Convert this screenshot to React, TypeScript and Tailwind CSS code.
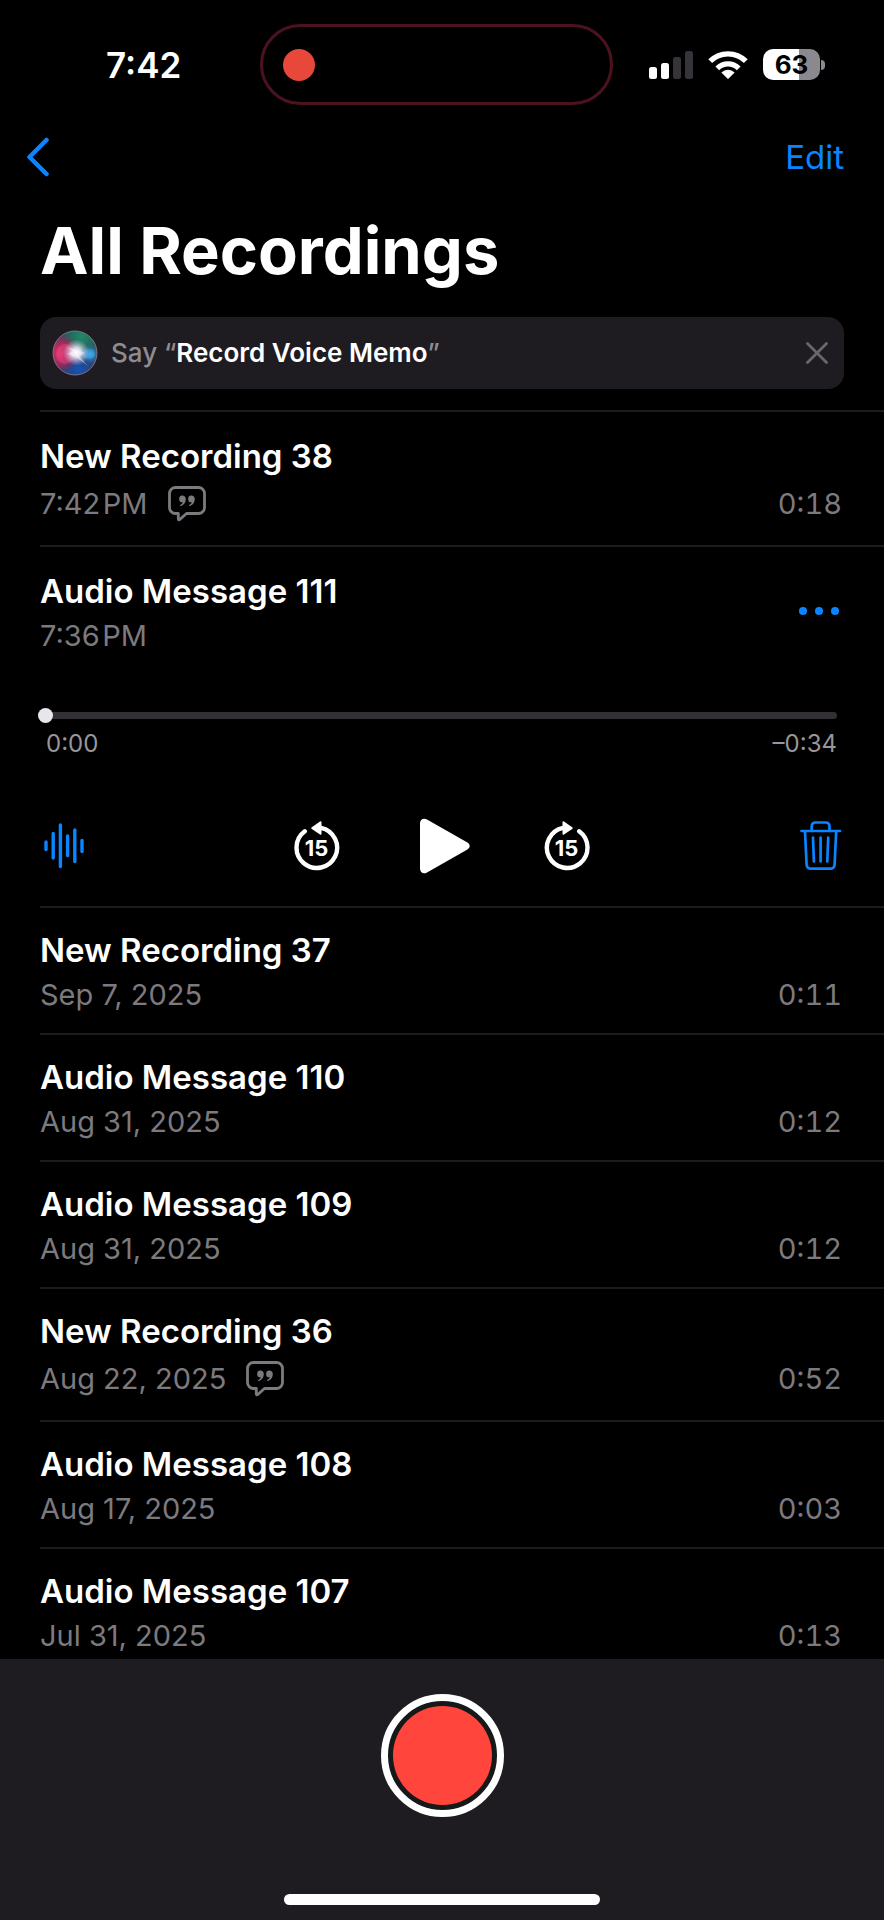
import React, { useState } from 'react';

interface Recording {
  id: number;
  title: string;
  date: string;
  duration: string;
  hasTranscript?: boolean;
}

const recordings: Recording[] = [
  { id: 1, title: 'New Recording 38', date: '7:42\u200APM', duration: '0:18', hasTranscript: true },
  { id: 2, title: 'Audio Message 111', date: '7:36\u200APM', duration: '0:34' },
  { id: 3, title: 'New Recording 37', date: 'Sep 7, 2025', duration: '0:11' },
  { id: 4, title: 'Audio Message 110', date: 'Aug 31, 2025', duration: '0:12' },
  { id: 5, title: 'Audio Message 109', date: 'Aug 31, 2025', duration: '0:12' },
  { id: 6, title: 'New Recording 36', date: 'Aug 22, 2025', duration: '0:52', hasTranscript: true },
  { id: 7, title: 'Audio Message 108', date: 'Aug 17, 2025', duration: '0:03' },
  { id: 8, title: 'Audio Message 107', date: 'Jul 31, 2025', duration: '0:13' },
];

const SignalIcon = () => (
  <svg width="44" height="28" viewBox="0 0 44 28" aria-hidden="true">
    <rect x="0" y="16" width="8" height="12" rx="2.5" fill="#fff" />
    <rect x="12" y="12" width="8" height="16" rx="2.5" fill="#fff" />
    <rect x="24" y="6" width="8" height="22" rx="2.5" fill="#363438" />
    <rect x="36" y="0" width="8" height="28" rx="2.5" fill="#363438" />
  </svg>
);

const WifiIcon = () => (
  <svg width="40" height="28" viewBox="0 0 40 28" fill="none" stroke="#fff" strokeWidth="5.4" aria-hidden="true">
    <path d="M2.2 10.2A25.2 25.2 0 0 1 37.8 10.2" />
    <path d="M9.3 17.3A15.1 15.1 0 0 1 30.7 17.3" />
    <path d="M13.4 21.4A9.3 9.3 0 0 1 26.6 21.4L20.6 27.6Q20 28.2 19.4 27.6Z" fill="#fff" stroke="none" />
  </svg>
);

const SiriOrb = () => (
  <svg width="46" height="46" viewBox="0 0 46 46" aria-hidden="true">
    <defs>
      <radialGradient id="orbPink" cx="0.15" cy="0.5" r="0.45">
        <stop offset="0" stopColor="#e03070" />
        <stop offset="0.6" stopColor="#b02454" stopOpacity="0.8" />
        <stop offset="1" stopColor="#902050" stopOpacity="0" />
      </radialGradient>
      <radialGradient id="orbGreen" cx="0.65" cy="0.12" r="0.5">
        <stop offset="0" stopColor="#1f8a68" />
        <stop offset="0.6" stopColor="#1f6f5c" stopOpacity="0.8" />
        <stop offset="1" stopColor="#1f6b5c" stopOpacity="0" />
      </radialGradient>
      <radialGradient id="orbBlue" cx="0.58" cy="0.88" r="0.55">
        <stop offset="0" stopColor="#1454b8" />
        <stop offset="1" stopColor="#1a3a80" stopOpacity="0" />
      </radialGradient>
      <radialGradient id="orbCyan" cx="0.85" cy="0.53" r="0.22">
        <stop offset="0" stopColor="#38b8f0" />
        <stop offset="1" stopColor="#2080d0" stopOpacity="0" />
      </radialGradient>
      <radialGradient id="orbGlow" cx="0.53" cy="0.49" r="0.3">
        <stop offset="0" stopColor="#fff" />
        <stop offset="0.35" stopColor="#f4f4ff" stopOpacity="0.85" />
        <stop offset="1" stopColor="#d0c8e8" stopOpacity="0" />
      </radialGradient>
    </defs>
    <circle cx="23" cy="23" r="22" fill="#3a4468" />
    <circle cx="23" cy="23" r="22" fill="url(#orbGreen)" />
    <circle cx="23" cy="23" r="22" fill="url(#orbBlue)" />
    <circle cx="23" cy="23" r="22" fill="url(#orbPink)" />
    <circle cx="23" cy="23" r="22" fill="url(#orbCyan)" />
    <ellipse cx="13" cy="24" rx="9" ry="10" fill="#ff5c98" opacity="0.3" />
    <ellipse cx="37" cy="24" rx="6" ry="5" fill="#40b0f0" opacity="0.4" />
    <circle cx="23" cy="23" r="22" fill="url(#orbGlow)" />
    <path d="M14 17L25 20L33 23L27 26L36 36L24 27L15 24L21 21Z" fill="#fff" opacity="0.4" />
    <circle cx="23" cy="23" r="22" fill="none" stroke="#8a8090" strokeWidth="1" opacity="0.8" />
  </svg>
);

const TranscriptIcon = () => (
  <svg width="38" height="36" viewBox="0 0 38 36" role="img" aria-label="Transcript available">
    <path
      d="M7.5 1.5H30.5A6 6 0 0 1 36.5 7.5V21.5A6 6 0 0 1 30.5 27.5H18.5L11.8 33.5Q10.500 34.500 10.300 33V27.500H7.500A6 6 0 0 1 1.500 21.500V7.500A6 6 0 0 1 7.500 1.500Z"
      fill="none"
      stroke="currentColor"
      strokeWidth="2.8"
      strokeLinejoin="round"
    />
    <path d="M14.3 9.5A3.5 3.5 0 0 1 17.8 13.2C17.8 16.5 15.8 19 12.9 20C12 20.3 11.7 19.3 12.4 18.9C13.7 18.2 14.5 17.3 14.8 16.3A3.4 3.4 0 1 1 14.3 9.5Z" fill="currentColor" />
    <path d="M23.3 9.5A3.5 3.5 0 0 1 26.8 13.2C26.8 16.5 24.8 19 21.9 20C21 20.3 20.7 19.3 21.4 18.9C22.7 18.2 23.5 17.3 23.8 16.3A3.4 3.4 0 1 1 23.3 9.5Z" fill="currentColor" />
  </svg>
);

const WaveIcon = () => (
  <svg width="40" height="46" viewBox="0 0 40 46" stroke="currentColor" strokeWidth="3.4" strokeLinecap="round" aria-hidden="true">
    <path d="M2 19V26.5M9.2 10.5V35M16.4 2V43.5M23.6 13V32.5M30.8 7V38.5M38 17.5V28.5" />
  </svg>
);

const SkipIcon = ({ forward = false }: { forward?: boolean }) => (
  <svg width="46" height="50" viewBox="0 0 46 50" aria-hidden="true">
    <g transform={forward ? 'matrix(-1 0 0 1 46 0)' : undefined}>
      <path d="M27 6.8A20.3 20.3 0 1 1 10.8 10.3" fill="none" stroke="#fff" strokeWidth="4.4" strokeLinecap="round" />
      <path d="M17.8 6.2L26 0.6Q27.5 -0.2 27.5 1.500V12.700Q27.500 14.400 26 13.500L17.800 8Q16.600 7 17.800 6.200Z" fill="#fff" />
    </g>
    <text x="22.5" y="35" textAnchor="middle" className="fill-white text-[22px] font-bold">
      15
    </text>
  </svg>
);

const PlayIcon = () => (
  <svg width="60" height="56" viewBox="0 0 60 56" fill="#fff" aria-hidden="true">
    <path d="M8 5.500C8 1.200 11.500 -0.500 15 1.500L55 24.300C58.600 26.500 58.600 29.500 55 31.700L15 54.500C11.500 56.500 8 54.800 8 50.500Z" />
  </svg>
);

const TrashIcon = () => (
  <svg width="42" height="50" viewBox="0 0 42 50" fill="none" stroke="currentColor" strokeWidth="2.7" strokeLinecap="round" aria-hidden="true">
    <path d="M1.5 10H40" />
    <path d="M11.7 10V5.5Q11.7 1.5 15.7 1.5H25.5Q29.5 1.5 29.5 5.5V10" />
    <path d="M5 10.5L6.6 43.5Q6.8 47.7 11 47.7H30.2Q34.4 47.7 34.6 43.5L36.200 10.500" />
    <path d="M13 16.500L13.900 40.500M20.600 16.500V40.500M28.200 16.500L27.300 40.500" />
  </svg>
);

const StatusBar = () => (
  <div className="grid grid-cols-[26fr_35fr_27fr] items-center pt-6">
    <div className="pl-[106px] text-[35px] leading-10 font-semibold text-white">7:42</div>
    <div className="-ml-px flex h-[81px] items-center rounded-full border-[3px] border-[#4d1220] pl-5">
      <div className="h-8 w-8 rounded-full bg-[#e8483a]" />
    </div>
    <div className="flex items-center justify-end gap-[15px] pr-[59px]">
      <SignalIcon />
      <WifiIcon />
      <div className="flex items-center gap-px">
        <div className="flex h-[31px] w-[57px] items-center justify-center rounded-[10px] bg-linear-to-r from-white from-63% to-[#8b898d] to-63% text-[26px] leading-none font-bold text-black">
          63
        </div>
        <div className="h-[10px] w-1 rounded-r-full bg-[#8b898d]" />
      </div>
    </div>
  </div>
);

const Player = ({ duration }: { duration: string }) => {
  const [position, setPosition] = useState(0);

  return (
    <div>
      <input
        type="range"
        aria-label="Playback position"
        min={0}
        max={34}
        value={position}
        onChange={(e) => setPosition(Number(e.target.value))}
        className="mt-[49px] -ml-[2px] block h-6 w-full appearance-none bg-transparent pr-[3px] [&::-webkit-slider-runnable-track]:h-[7px] [&::-webkit-slider-runnable-track]:rounded-full [&::-webkit-slider-runnable-track]:bg-[#323034] [&::-webkit-slider-thumb]:-mt-1 [&::-webkit-slider-thumb]:h-[15px] [&::-webkit-slider-thumb]:w-[15px] [&::-webkit-slider-thumb]:appearance-none [&::-webkit-slider-thumb]:rounded-full [&::-webkit-slider-thumb]:bg-[#e8e6ea]"
      />
      <div className="mt-[3px] flex justify-between pr-[5px] pl-[6px] text-2xl leading-7 text-[#98969a]">
        <span>0:00</span>
        <span>–{duration}</span>
      </div>
      <div className="mt-[60px] mb-3 flex items-center justify-between pl-1">
        <button type="button" aria-label="Edit waveform" className="text-[#0a84ff]">
          <WaveIcon />
        </button>
        <div className="flex items-center gap-[72px]">
          <button type="button" aria-label="Skip back 15 seconds">
            <SkipIcon />
          </button>
          <button type="button" aria-label="Play">
            <PlayIcon />
          </button>
          <button type="button" aria-label="Skip forward 15 seconds">
            <SkipIcon forward />
          </button>
        </div>
        <button type="button" aria-label="Delete" className="text-[#0a84ff]">
          <TrashIcon />
        </button>
      </div>
    </div>
  );
};

const RecordingRow = ({ recording, expanded }: { recording: Recording; expanded: boolean }) => (
  <li className="ml-10 border-t-2 border-[#1c1b1d] pt-[22px] pr-[42px] pb-5 first:pt-6 nth-2:pt-6">
    <div className="flex items-center justify-between">
      <div className="flex flex-1 flex-col gap-[7px]">
        <h2 className="text-[33px] leading-10 font-semibold text-white">{recording.title}</h2>
        <div className="flex items-center justify-between text-[29px] leading-9 text-[#7c7a7e]">
          <div className="flex items-center gap-5">
            <span>{recording.date}</span>
            {recording.hasTranscript && (
              <span className="py-[3px]">
                <TranscriptIcon />
              </span>
            )}
          </div>
          {!expanded && <span className="tabular-nums">{recording.duration}</span>}
        </div>
      </div>
      {expanded && (
        <button type="button" aria-label="More options" className="flex gap-2 pr-[3px] pb-1">
          <span className="h-2 w-2 rounded-full bg-[#0a84ff]" />
          <span className="h-2 w-2 rounded-full bg-[#0a84ff]" />
          <span className="h-2 w-2 rounded-full bg-[#0a84ff]" />
        </button>
      )}
    </div>
    {expanded && <Player duration={recording.duration} />}
  </li>
);

export default function App() {
  const [tipVisible, setTipVisible] = useState(true);
  const selectedId = 2;

  return (
    <div className="flex h-screen flex-col overflow-hidden bg-black font-[Inter,'Liberation_Sans',sans-serif]">
      <StatusBar />

      <header className="px-10">
        <nav className="mt-6 flex h-14 items-center justify-between">
          <button type="button" aria-label="Back" className="-ml-[14px]">
            <svg width="24" height="40" viewBox="0 0 24 40" fill="none" stroke="#0a84ff" strokeWidth="4.5" strokeLinecap="round" strokeLinejoin="round">
              <path d="M20.5 3L3.5 20L20.5 37" />
            </svg>
          </button>
          <button type="button" className="text-[33px] leading-10 text-[#0a84ff]">
            Edit
          </button>
        </nav>
        <h1 className="mt-[26px] text-[65px] leading-[80px] font-bold text-white">All Recordings</h1>
        {tipVisible && (
          <div className="mt-[26px] flex h-[72px] items-center rounded-2xl bg-[#1f1c21] pr-4 pl-3">
            <SiriOrb />
            <p className="ml-[13px] flex-1 text-[26px] leading-8 font-medium text-[#8e8c91]">
              Say “<span className="font-semibold text-white">Record Voice Memo</span>”
            </p>
            <button type="button" aria-label="Dismiss" onClick={() => setTipVisible(false)}>
              <svg width="22" height="22" viewBox="0 0 22 22" stroke="#69676b" strokeWidth="2.8" strokeLinecap="round">
                <path d="M1.5 1.5L20.5 20.5M20.5 1.5L1.5 20.5" />
              </svg>
            </button>
          </div>
        )}
      </header>

      <main className="mt-[21px] min-h-0 flex-1 overflow-hidden">
        <ul>
          {recordings.map((recording) => (
            <RecordingRow key={recording.id} recording={recording} expanded={recording.id === selectedId} />
          ))}
        </ul>
      </main>

      <footer className="flex flex-col items-center bg-[#1f1c21] pt-[35px] pb-[15px]">
        <button
          type="button"
          aria-label="Record"
          className="flex h-[123px] w-[123px] items-center justify-center rounded-full border-[7px] border-white bg-[#16191a]"
        >
          <span className="h-[99px] w-[99px] rounded-full bg-[#ff453c]" />
        </button>
        <div className="mt-[77px] h-[11px] w-[316px] rounded-full bg-white" />
      </footer>
    </div>
  );
}
